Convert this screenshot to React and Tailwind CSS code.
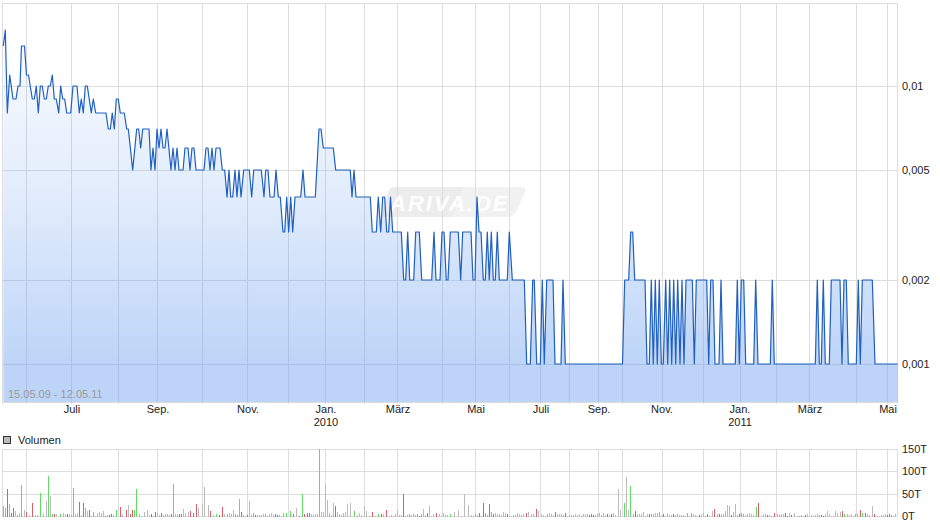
const gridX = [2, 26, 71, 118, 157, 202, 247, 288, 325, 364, 397, 442, 475, 509, 540, 569, 598, 622, 662, 703, 740, 776, 809, 856, 887, 897];

const priceAxis = [
  { y: 86, label: "0,01" },
  { y: 170, label: "0,005" },
  { y: 280, label: "0,002" },
  { y: 364, label: "0,001" },
];

const months = [
  { x: 72, label: "Juli" },
  { x: 158, label: "Sep." },
  { x: 248, label: "Nov." },
  { x: 326, label: "Jan.", year: "2010" },
  { x: 398, label: "März" },
  { x: 476, label: "Mai" },
  { x: 541, label: "Juli" },
  { x: 599, label: "Sep." },
  { x: 662, label: "Nov." },
  { x: 740, label: "Jan.", year: "2011" },
  { x: 810, label: "März" },
  { x: 888, label: "Mai" },
];

const volumeAxis = [
  { y: 6.5, label: "150T" },
  { y: 28.5, label: "100T" },
  { y: 51.5, label: "50T" },
  { y: 73.5, label: "0T" },
];

// x,y pairs read off the reference
const line = [
  3.3,46, 5.3,30, 7.3,113, 9.7,75, 13,99, 16,99, 18,86, 20,86, 21.5,46, 24.5,46, 26.5,75, 28.5,75, 32.3,99, 34.3,99,
  36.3,86, 38.3,113, 40.3,86, 42.3,86, 44.3,99, 46.3,99, 48.3,86, 50.3,86, 52.3,75, 54.3,99, 56.3,99, 58.7,113,
  60.7,86, 62.7,99, 64.7,99, 66.7,113, 70.7,113, 73,86, 77,86, 79.3,113, 81.3,99, 83.3,113, 85.3,86, 87.3,86,
  91.3,113, 93.3,99, 95.7,113, 106,113, 108.3,129, 110.3,129, 112.3,113, 114.3,129, 116.3,99, 118.3,99, 120.3,113,
  124.3,113, 126.7,129, 128.3,129, 132.7,170, 136.7,129, 138.7,129, 140.7,148, 142.7,129, 149,129, 151,170, 153,148,
  155,170, 157,129, 159,148, 161,129, 163,148, 165,148, 167,129, 171,170, 173,148, 175,170, 177,148, 179,170, 183,170,
  185,148, 188,148, 190,170, 192,148, 194,148, 196,170, 204,170, 206,148, 208,148, 210,170, 212,148, 214,170, 216,148,
  220,148, 222.3,170, 224.7,170, 227,197, 229,170, 230.7,197, 232.7,197, 235,170, 237,197, 239,170, 241,197, 243.7,170,
  249.3,170, 251.7,197, 253.7,170, 261.3,170, 264,197, 265.7,170, 268,170, 270,197, 274,197, 276,170, 278.3,197,
  280.3,197, 283,232, 284.7,232, 286.7,197, 288.7,232, 290.7,197, 292.7,232, 295,197, 300.7,197, 303,170, 305,197,
  315.3,197, 319,129, 321,129, 323.3,148, 333.3,148, 335.7,170, 350.3,170, 352,197, 354,170, 356,197, 370.3,197,
  372.3,232, 376.3,232, 378.3,197, 380.7,232, 382.7,197, 384.7,197, 386.7,232, 388.7,232, 390.5,197, 392.7,232,
  401.3,232, 403.7,280, 405.7,280, 407.7,232, 409.7,280, 413.7,280, 415.7,232, 419.3,232, 421.7,280, 431.7,280, 434,232,
  436,280, 440,280, 442,232, 444,232, 446.3,280, 448,280, 450.3,232, 458.3,232, 460.7,280, 462.7,232, 471,232, 473,280,
  475,280, 477,197, 479,232, 481,232, 483.3,280, 485.3,280, 487.3,232, 489.3,280, 491.3,232, 493.3,280, 495.3,280,
  497.3,232, 499.3,280, 507.3,280, 509.3,232, 512.3,280, 524.3,280, 526.7,364, 530.3,364, 532.7,280, 534.3,280,
  536.7,364, 540.3,364, 542.3,280, 544.3,364, 546.7,280, 553,280, 555,364, 561,364, 563,280, 565.3,364, 622.5,364,
  624.7,280, 628.7,280, 630.7,232, 632.7,232, 634.7,280, 645,280, 647,364, 649.3,364, 651.3,280, 653.3,364, 655.3,280,
  657.3,364, 659.3,280, 661.3,364, 663.3,364, 665.7,280, 667.7,364, 669.7,280, 671.7,364, 673.7,280, 675.7,364,
  677.7,280, 680,364, 682,280, 684,364, 686,280, 692.3,280, 694.3,364, 696.3,280, 706.7,280, 708.7,364, 710.7,280,
  713,280, 715,364, 719,364, 721,280, 723,364, 735.3,364, 737.3,280, 739.3,364, 741.3,280, 743.7,280, 745.7,364,
  753.7,364, 755.7,280, 758,364, 770.3,364, 772.3,280, 774.3,364, 815.3,364, 817.3,280, 819.3,364, 821.3,364,
  823.3,280, 825.3,364, 829.3,364, 831.3,280, 840,280, 842,364, 844,280, 846.3,280, 848.3,364, 856.3,364, 858.3,280,
  860.3,364, 862.3,280, 872.3,280, 875,364, 897.7,364,
];

const linePoints = line.reduce((acc, v, i) => (i % 2 ? acc + "," + v + " " : acc + v), "").trim();
const areaPoints = `3.3,402 ${linePoints} 897.7,402`;

const GREEN = "#62dc62";
const RED = "#d9606a";
const GRAY = "#bbbbbb";

// the tall bars: x, height, colour
const bigBars = [
  [3,10.7,GREEN],[5,8.7,GREEN],[7,27.7,RED],[9,12.7,GREEN],[11,4,RED],[13,8.7,RED],[15,6,GRAY],[17,2,GREEN],[19,4,GRAY],
  [21,31.7,GREEN],[24,7.3,GRAY],[26,4.7,RED],[32,13.7,RED],[40,23.7,GREEN],[46,16,GRAY],[48,40.7,GREEN],[50,21,GRAY],
  [52,3.5,GREEN],[54,3.5,RED],[56,3.5,GRAY],[60,3.5,GREEN],[67,2.7,RED],[73,28.7,GREEN],[75,2.7,GRAY],[79,14.7,RED],
  [83,13.7,RED],[85,8.7,GREEN],[87,6,GRAY],[89,6.7,RED],[93,4.7,GREEN],[97,3.7,GRAY],[99,4.7,GRAY],[101,4,GRAY],[103,5.7,GRAY],
  [116,7.3,GREEN],[120,9.7,RED],[122,3.5,GRAY],[126,6.7,RED],[128,11.7,GRAY],[130,3.5,RED],[132,6.7,RED],[134,6.7,GREEN],
  [136,27.7,GREEN],[144,4.7,GRAY],[147,6.7,GRAY],[151,3.5,RED],[155,4.7,RED],[171,3.5,RED],[173,32.7,GREEN],[179,3.5,RED],
  [181,3.5,RED],[183,7.7,GRAY],[188,4.7,GRAY],[190,5.7,RED],[196,12.7,RED],[198,8.7,GRAY],[202,11.7,GRAY],[204,29.7,GRAY],
  [208,11.7,GRAY],[210,5.7,RED],[216,3.5,GREEN],[222,9.7,RED],[224,2.7,GRAY],[233,6.7,GRAY],[235,3.5,GREEN],[239,17.7,GREEN],
  [241,4.7,RED],[249,15.7,GRAY],[286,3.7,GREEN],[290,5.7,GREEN],[293,2.7,RED],[296,8.7,GRAY],[302,22.7,GREEN],
  [304,2.7,RED],[319,67.7,GREEN],[321,4.7,GRAY],[323,4.7,GRAY],[325,31.7,GRAY],[327,16.7,GRAY],[333,13.7,GRAY],[335,10.7,RED],
  [337,4.7,GRAY],[343,4,GRAY],[345,4.7,GRAY],[347,12.7,GRAY],[350,13.7,GRAY],[354,5.7,GREEN],[364,10.7,GRAY],[366,5.7,GRAY],
  [372,4.7,RED],[378,3.5,GREEN],[386,6.7,RED],[397,6.7,GRAY],[403,22.7,RED],[423,7.7,GRAY],[429,10.7,GRAY],[436,3.7,RED],
  [450,2.7,GREEN],[454,4.7,GRAY],[458,6.7,GRAY],[464,22.7,GRAY],[468,11.7,GRAY],[483,13.7,RED],[489,12.7,RED],[491,4.7,GREEN],
  [493,2.7,RED],[503,4.7,GRAY],[526,3.7,RED],[528,4.7,GRAY],[536,7.7,RED],[538,5.7,GRAY],[555,4.7,RED],[557,2.7,GRAY],
  [565,3.7,RED],[618,27.7,GRAY],[620,6.7,GRAY],[624,13.7,GREEN],[626,39.7,GRAY],[628,6.7,GRAY],[630,30.7,GREEN],[635,5.7,RED],
  [643,4.7,GRAY],[651,2.7,GREEN],[659,4.7,GREEN],[712,5.7,GRAY],[714,7.7,RED],[725,5.7,GRAY],[727,11.7,GRAY],[729,10.7,GRAY],
  [733,4.7,GRAY],[735,12.7,GRAY],[741,3.7,GREEN],[751,2.7,GRAY],[756,9.7,GREEN],[758,13.7,RED],[774,3.7,RED],[794,3.7,GRAY],
  [827,5.7,GRAY],[835,5.7,GRAY],[840,4.7,GRAY],[842,5.7,RED],[844,2.7,GREEN],[860,6.7,RED],[862,3.7,GREEN],[872,10.7,GRAY],[874,2.7,RED],
];

// the low bars between them follow a fixed sequence so every render is the same
function buildBars() {
  const taken = new Set(bigBars.map((b) => b[0]));
  const bars = [...bigBars];
  let seed = 17;
  for (let x = 3; x < 897; x += 2) {
    seed = (seed * 137 + 59) % 1009;
    if (taken.has(x) || taken.has(x + 1) || taken.has(x - 1)) continue;
    const color = seed % 7 === 0 ? RED : seed % 11 === 0 ? GREEN : GRAY;
    bars.push([x, 1 + (seed % 30) / 10, color]);
  }
  return bars;
}

const bars = buildBars();

function PriceChart() {
  return (
    <svg width="940" height="431" className="block">
      <defs>
        <linearGradient id="area" gradientUnits="userSpaceOnUse" x1="0" y1="30" x2="0" y2="402">
          <stop offset="0" stopColor="#6ca0ef" stopOpacity="0.03" />
          <stop offset="0.45" stopColor="#6ca0ef" stopOpacity="0.2" />
          <stop offset="0.9" stopColor="#6ca0ef" stopOpacity="0.45" />
          <stop offset="1" stopColor="#6ca0ef" stopOpacity="0.45" />
        </linearGradient>
      </defs>

      {/* grid */}
      <g stroke="#dddddd" shapeRendering="crispEdges">
        {gridX.map((x) => (
          <line key={x} x1={x + 0.5} y1="3" x2={x + 0.5} y2="404" />
        ))}
        <line x1="2" y1="3.5" x2="898" y2="3.5" />
        {priceAxis.map((t) => (
          <line key={t.y} x1="2" y1={t.y + 0.5} x2="898" y2={t.y + 0.5} />
        ))}
        <line x1="2" y1="402.5" x2="898" y2="402.5" />
      </g>

      {/* watermark */}
      <path d="M390 187H464L452 217H386Q381 217 383 212L388 192Q389 187 394 187Z" fill="#dcdcdc" fillOpacity="0.55" />
      <path d="M464 187H521Q526 187 525 192L517 210Q514 217 508 217H452Z" fill="#e4e4e4" fillOpacity="0.5" />
      <text x="390" y="211" fill="#ffffff" fontSize="22" fontWeight="700" fontStyle="italic" letterSpacing="2">
        ARIVA.DE
      </text>

      {/* price */}
      <polygon points={areaPoints} fill="url(#area)" />
      <polyline points={linePoints} fill="none" stroke="#2060c0" strokeWidth="1.2" strokeLinejoin="round" />

      <text x="8" y="398" fill="#9a9a9a" fontSize="11">
        15.05.09 - 12.05.11
      </text>

      {priceAxis.map((t) => (
        <text key={t.y} x="902" y={t.y + 4} fill="#222222" fontSize="11">
          {t.label}
        </text>
      ))}
      {months.map((m) => (
        <g key={m.x} fill="#222222" fontSize="11" textAnchor="middle">
          <text x={m.x} y="413">
            {m.label}
          </text>
          {m.year && (
            <text x={m.x} y="426">
              {m.year}
            </text>
          )}
        </g>
      ))}
    </svg>
  );
}

function VolumeChart() {
  return (
    <svg width="940" height="83" className="block">
      <g stroke="#dddddd" shapeRendering="crispEdges">
        {gridX.map((x) => (
          <line key={x} x1={x + 0.5} y1="6" x2={x + 0.5} y2="74" />
        ))}
        {volumeAxis.map((t) => (
          <line key={t.y} x1="2" y1={t.y} x2="898" y2={t.y} />
        ))}
      </g>
      <g shapeRendering="crispEdges">
        {bars.map(([x, h, color], i) => (
          <rect key={i} x={x} y={74 - h} width="1" height={h} fill={color} />
        ))}
      </g>
      {volumeAxis.map((t) => (
        <text key={t.y} x="902" y={t.y + 3.5} fill="#222222" fontSize="11">
          {t.label}
        </text>
      ))}
    </svg>
  );
}

export default function App() {
  return (
    <div className="w-[940px] h-[526px] bg-white overflow-hidden font-['Liberation_Sans',Arial,sans-serif]">
      <PriceChart />

      {/* Legend */}
      <div className="flex items-center gap-[7px] h-[12px] pt-[6px] pl-[3px] text-[11px] leading-none text-[#222222]">
        <span className="w-2 h-2 border border-[#333333] bg-[#bbbbbb]"></span>
        <span>Volumen</span>
      </div>

      <VolumeChart />
    </div>
  );
}
